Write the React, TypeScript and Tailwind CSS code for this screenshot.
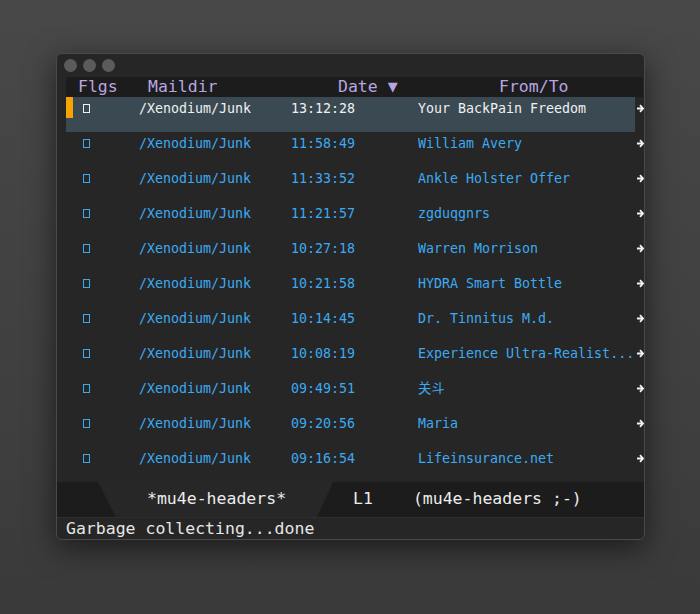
import React from "react";

const rows = [
  { t: "13:12:28", f: "Your BackPain Freedom" },
  { t: "11:58:49", f: "William Avery" },
  { t: "11:33:52", f: "Ankle Holster Offer" },
  { t: "11:21:57", f: "zgduqgnrs" },
  { t: "10:27:18", f: "Warren Morrison" },
  { t: "10:21:58", f: "HYDRA Smart Bottle" },
  { t: "10:14:45", f: "Dr. Tinnitus M.d." },
  { t: "10:08:19", f: "Experience Ultra-Realist..." },
  { t: "09:49:51", f: "关斗" },
  { t: "09:20:56", f: "Maria" },
  { t: "09:16:54", f: "Lifeinsurance.net" },
];

const mono = "font-['DejaVu_Sans_Mono','Noto_Sans_CJK_SC',monospace]";

function Arrow() {
  return (
    <svg width="7" height="9" viewBox="0 0 7 9" className="shrink-0">
      <path d="M0 4.5H6M3 1.2L6 4.5L3 7.8" stroke="#f2f2f2" strokeWidth="1.8" fill="none" />
    </svg>
  );
}

export default function App() {
  return (
    <div className={`min-h-[614px] w-[700px] bg-linear-to-b from-[#484848] to-[#3a3a3a] pt-[53px] pl-[56px] ${mono}`}>
      <div className="w-[589px] h-[487px] rounded-[6px] border border-[#4a4a4a] bg-[#262626] shadow-[0_8px_30px_rgba(0,0,0,0.55)] overflow-hidden flex flex-col">
        {/* title bar */}
        <div className="h-[23px] flex items-center gap-[6px] pl-[7px] shrink-0">
          <span className="w-[13px] h-[13px] rounded-full bg-[#5b5b5b]" />
          <span className="w-[13px] h-[13px] rounded-full bg-[#5b5b5b]" />
          <span className="w-[13px] h-[13px] rounded-full bg-[#5b5b5b]" />
        </div>
        {/* header line */}
        <div className="ml-[9px] w-[577px] h-[20px] bg-[#1c1c1c] flex items-center text-[16.5px] leading-[20px] text-[#b8a5e0] shrink-0 whitespace-nowrap">
          <span className="ml-[12px] w-[70px]">Flgs</span>
          <span className="w-[190px]">Maildir</span>
          <span className="w-[161px]">Date ▼</span>
          <span>From/To</span>
        </div>
        {/* rows */}
        <div className="flex flex-col shrink-0">
          {rows.map((r, i) => {
            const hl = i === 0;
            const color = hl ? "text-[#f0f0f0]" : "text-[#3caaf2]";
            return (
              <div key={i} className="ml-[9px] h-[35px] flex items-start">
                <div className={`w-[569px] h-[35px] ${hl ? "bg-[#3b4a52]" : ""} ${color}`}>
                  <div className="h-[23px] flex items-center text-[13.3px] whitespace-nowrap">
                    <span className={`w-[7px] h-[21px] self-start ${hl ? "bg-[#f7a400]" : ""}`} />
                    <span className="w-[66px] flex items-center">
                      <span className="ml-[10px] w-[7px] h-[9px] border border-current" />
                    </span>
                    <span className="w-[152px]">/Xenodium/Junk</span>
                    <span className="w-[127px]">{r.t}</span>
                    <span className="flex-1 overflow-hidden">{r.f}</span>
                  </div>
                </div>
                <div className="h-[23px] flex items-center ml-[2px]">
                  <Arrow />
                </div>
              </div>
            );
          })}
        </div>
        {/* mode line */}
        <div className="h-[35px] bg-[#1c1c1c] flex items-center text-[16.5px] text-[#ececec] whitespace-nowrap shrink-0">
          <div className="w-[41px] h-full" />
          <div className="w-[235px] h-full bg-[#272727] flex items-center pl-[49px] [clip-path:polygon(0_0,100%_0,calc(100%-16px)_100%,18px_100%)]">
            *mu4e-headers*
          </div>
          <span className="ml-[20px]">L1</span>
          <span className="ml-[40px]">(mu4e-headers ;-)</span>
        </div>
        {/* echo area */}
        <div className="h-[22px] pl-[9px] text-[16.5px] leading-[22px] text-[#e6e6e6] whitespace-nowrap shrink-0 border-t border-[#2e2e2e]">
          Garbage collecting...done
        </div>
      </div>
    </div>
  );
}
